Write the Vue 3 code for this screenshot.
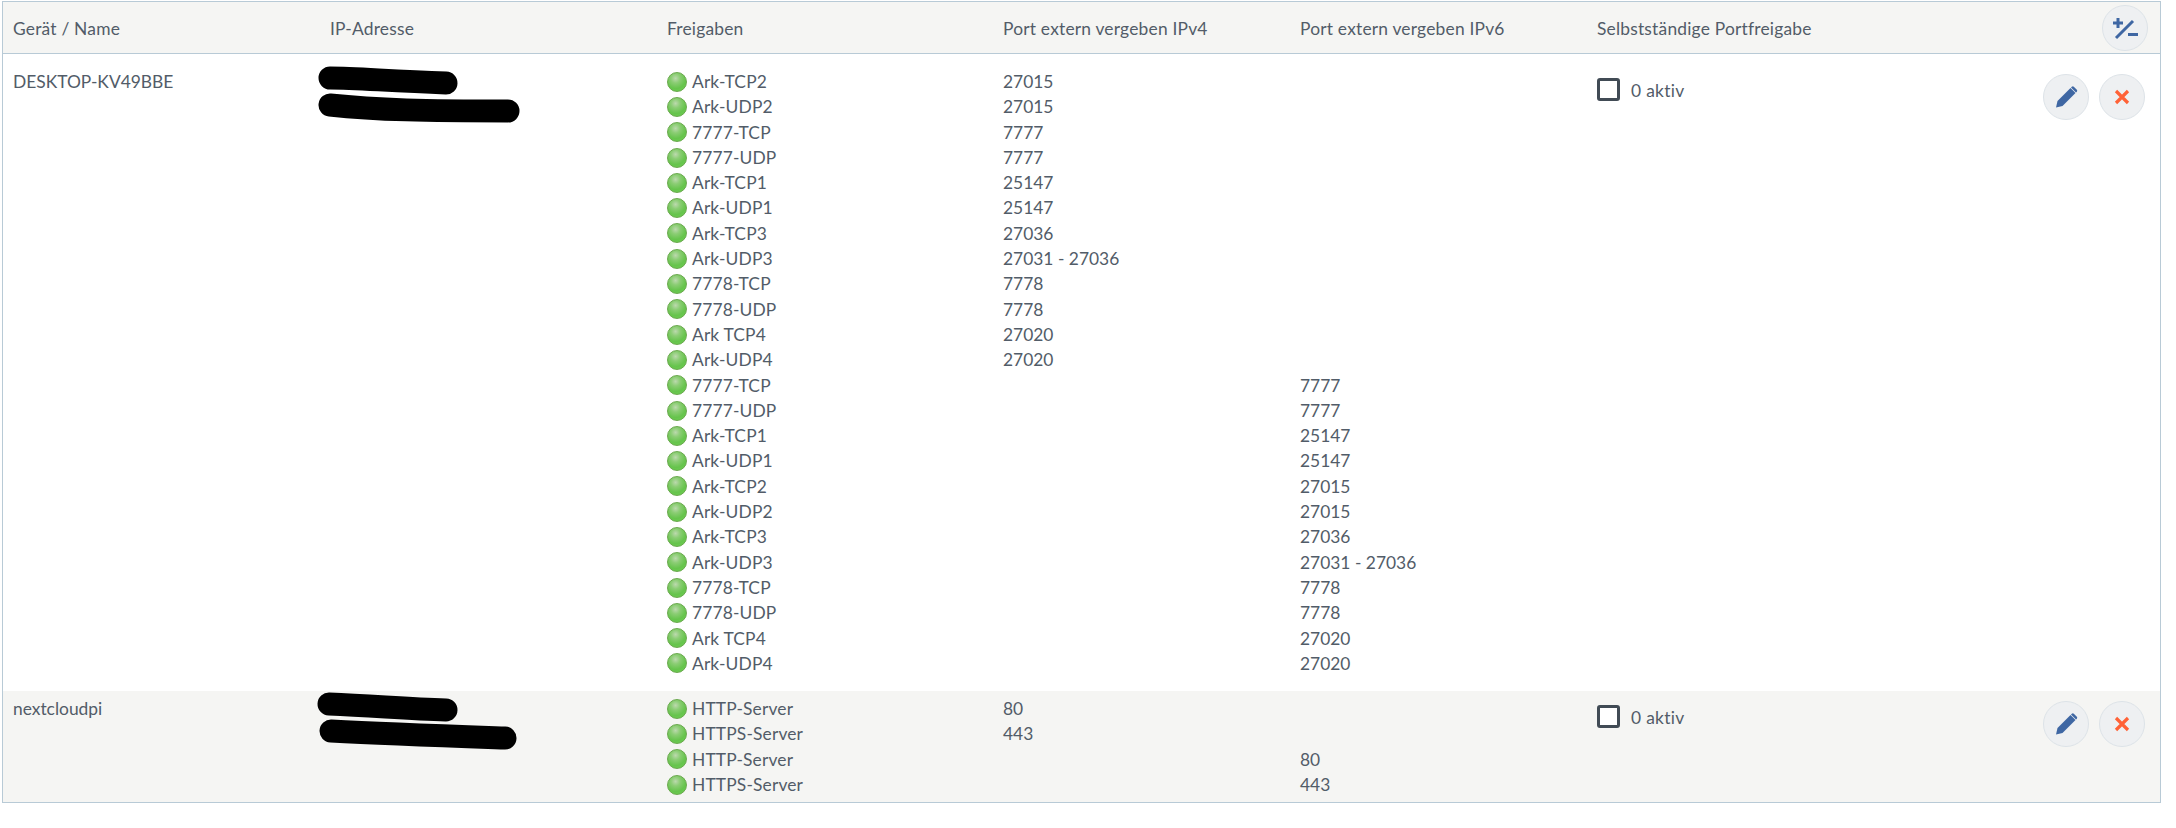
<script setup>
const v4 = [
  ['Ark-TCP2', '27015'], ['Ark-UDP2', '27015'], ['7777-TCP', '7777'], ['7777-UDP', '7777'],
  ['Ark-TCP1', '25147'], ['Ark-UDP1', '25147'], ['Ark-TCP3', '27036'], ['Ark-UDP3', '27031 - 27036'],
  ['7778-TCP', '7778'], ['7778-UDP', '7778'], ['Ark TCP4', '27020'], ['Ark-UDP4', '27020'],
]
const v6 = [
  ['7777-TCP', '7777'], ['7777-UDP', '7777'], ['Ark-TCP1', '25147'], ['Ark-UDP1', '25147'],
  ['Ark-TCP2', '27015'], ['Ark-UDP2', '27015'], ['Ark-TCP3', '27036'], ['Ark-UDP3', '27031 - 27036'],
  ['7778-TCP', '7778'], ['7778-UDP', '7778'], ['Ark TCP4', '27020'], ['Ark-UDP4', '27020'],
]
const devices = [
  {
    name: 'DESKTOP-KV49BBE',
    first: true,
    scribbles: ['M13 15 C 40 15 70 18 129 20', 'M13 42 C 60 47 110 48 191 48'],
    lines: [
      ...v4.map(([n, p]) => ({ n, a: p, b: '\u00a0' })),
      ...v6.map(([n, p]) => ({ n, a: '\u00a0', b: p })),
    ],
  },
  {
    name: 'nextcloudpi',
    first: false,
    scribbles: ['M12 14 C 60 16 90 19 129 20', 'M14 41 C 70 44 130 46 188 48'],
    lines: [
      { n: 'HTTP-Server', a: '80', b: '\u00a0' },
      { n: 'HTTPS-Server', a: '443', b: '\u00a0' },
      { n: 'HTTP-Server', a: '\u00a0', b: '80' },
      { n: 'HTTPS-Server', a: '\u00a0', b: '443' },
    ],
  },
]
</script>

<template>
  <div class="page">
    <div class="table">
      <div class="head grid">
        <div>Gerät / Name</div>
        <div>IP-Adresse</div>
        <div>Freigaben</div>
        <div>Port extern vergeben IPv4</div>
        <div>Port extern vergeben IPv6</div>
        <div class="last">
          <span>Selbstständige Portfreigabe</span>
          <button class="btn head-btn" aria-label="Spalten">
            <svg width="28" height="24" viewBox="0 0 28 24">
              <path d="M7 2v10M2 7h10" stroke="#3f67a3" stroke-width="3" fill="none" />
              <path d="M5 22L22 5" stroke="#3f67a3" stroke-width="3" fill="none" />
              <path d="M17 18.500h10" stroke="#3f67a3" stroke-width="3" fill="none" />
            </svg>
          </button>
        </div>
      </div>

      <div
        v-for="d in devices"
        :key="d.name"
        class="row grid"
        :class="{ first: d.first, alt: !d.first }"
      >
        <div class="line">{{ d.name }}</div>
        <div class="ip">
          <svg class="scribble" width="210" height="60" viewBox="0 0 210 60">
            <path
              v-for="(s, i) in d.scribbles"
              :key="i"
              :d="s"
              fill="none"
              stroke="#000"
              stroke-width="23"
              stroke-linecap="round"
            />
          </svg>
        </div>
        <div>
          <div v-for="(l, i) in d.lines" :key="i" class="line share">
            <span class="dot"></span><span>{{ l.n }}</span>
          </div>
        </div>
        <div>
          <div v-for="(l, i) in d.lines" :key="i" class="line">{{ l.a }}</div>
        </div>
        <div>
          <div v-for="(l, i) in d.lines" :key="i" class="line">{{ l.b }}</div>
        </div>
        <div class="last top">
          <label class="check"><span class="box"></span><span class="count">0 aktiv</span></label>
          <div class="actions">
            <button class="btn" aria-label="Bearbeiten">
              <svg width="24" height="24" viewBox="0 0 24 24">
                <path d="M2 22.500l1.500-6.500L16.500 3l5 5L8.500 21z" fill="#3f67a3" />
                <path d="M17.800 1.800a1.500 1.500 0 0 1 2 0l3 3a1.500 1.500 0 0 1 0 2l-.8.800-5-5z" fill="#3f67a3" />
              </svg>
            </button>
            <button class="btn" aria-label="Löschen">
              <svg width="16" height="16" viewBox="0 0 16 16">
                <path d="M2 2l12 12M14 2L2 14" stroke="#ff6237" stroke-width="3.200" fill="none" />
              </svg>
            </button>
          </div>
        </div>
      </div>
    </div>
  </div>
</template>

<style scoped>
.page {
  padding: 1px 15px 0 2px;
  font-family: "Lato", "Liberation Sans", sans-serif;
  font-size: 17.4px;
  color: #525c68;
}
.table {
  border: 1px solid #b8cad6;
}
.grid {
  display: grid;
  grid-template-columns: 317px 337px 336px 297px 297px 1fr;
  padding-left: 10px;
}
.head {
  height: 51px;
  padding-top: 1px;
  height: 50px;
  background: #f5f5f3;
  border-bottom: 1px solid #b8cad6;
  align-items: center;
  box-sizing: content-box;
  letter-spacing: 0.2px;
}
.last {
  display: flex;
  justify-content: space-between;
  align-items: center;
  padding-right: 12px;
}
.head-btn {
  margin-top: -1px;
}
.last.top {
  align-items: flex-start;
  padding-right: 15px;
}
.row.first {
  padding-top: 15px;
  padding-bottom: 15px;
}
.row.alt {
  padding-top: 5px;
  padding-bottom: 5px;
  background: #f5f5f3;
}
.line {
  height: 25.3px;
  line-height: 25.3px;
  white-space: nowrap;
}
.share {
  display: flex;
  align-items: center;
  gap: 5px;
  letter-spacing: 0.15px;
}
.dot {
  width: 20px;
  height: 20px;
  box-sizing: border-box;
  border-radius: 50%;
  border: 1px solid #69a84c;
  background: radial-gradient(circle at 42% 30%, #bcd9ae 0, #8bcd74 28%, #66c44c 62%, #6ed155 100%);
}
.scribble {
  display: block;
  margin: -6px 0 0 -13px;
}
.check {
  display: flex;
  align-items: center;
  gap: 11px;
  margin-top: 9px;
}
.count {
  padding-top: 1px;
  letter-spacing: 0.3px;
}
.box {
  width: 23px;
  height: 23px;
  box-sizing: border-box;
  border: 3px solid #414b55;
  border-radius: 3px;
  background: #fff;
}
.actions {
  display: flex;
  gap: 10px;
  margin-top: 5px;
}
.btn {
  width: 46px;
  height: 46px;
  padding: 0;
  border: 1px solid #dde3e8;
  border-radius: 50%;
  background: #eef0f2;
  display: flex;
  align-items: center;
  justify-content: center;
}
</style>
